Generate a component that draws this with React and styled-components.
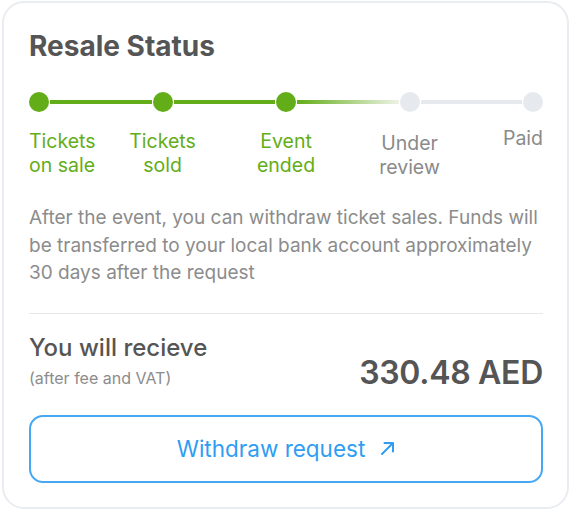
import React from 'react';
import styled, { createGlobalStyle } from 'styled-components';

const GlobalStyle = createGlobalStyle`
  body {
    margin: 0;
    background: #ffffff;
    font-family: Inter, "Noto Sans", sans-serif;
  }
`;

const green = '#63ad18';
const grey = '#e6eaef';

const Page = styled.div`
  padding: 1px 2px;
`;

const Card = styled.div`
  width: 567px;
  height: 508px;
  box-sizing: border-box;
  border: 2px solid #e9ecf0;
  border-radius: 22px;
  padding: 26px 24px 0 25px;
  display: flex;
  flex-direction: column;
`;

const Title = styled.h2`
  margin: 0;
  font-size: 28px;
  font-weight: 700;
  color: #555555;
  line-height: 34px;
`;

const Track = styled.div`
  display: flex;
  margin-top: 29px;
`;

const Step = styled.div`
  width: 20px;
  display: flex;
  flex-direction: column;
  align-items: ${(p) => p.$align || 'center'};
`;

const Dot = styled.div`
  width: 20px;
  height: 20px;
  border-radius: 50%;
  background: ${(p) => (p.$done ? green : grey)};
`;

const Connector = styled.div`
  flex: 1;
  height: 4px;
  margin: 8px 1px 0;
  background: ${(p) => p.$fill};
`;

const Label = styled.div`
  margin-top: ${(p) => p.$offset}px;
  white-space: nowrap;
  text-align: ${(p) => p.$textAlign || 'center'};
  font-size: 19.5px;
  line-height: 24px;
  color: ${(p) => (p.$done ? green : '#8a8a8a')};
`;

const Description = styled.p`
  margin: 25px 0 0;
  font-size: 19px;
  line-height: 27.5px;
  color: #8c8c8c;
`;

const Divider = styled.hr`
  margin: 26px 0 0;
  border: 0;
  height: 1px;
  background: #e6e8ec;
`;

const TotalRow = styled.div`
  display: flex;
  justify-content: space-between;
  align-items: flex-end;
  margin-top: 19px;
`;

const TotalLabel = styled.div`
  display: flex;
  flex-direction: column;
`;

const Receive = styled.span`
  font-size: 24px;
  font-weight: 500;
  line-height: 30px;
  color: #555555;
`;

const Note = styled.span`
  font-size: 16px;
  line-height: 22px;
  color: #8c8c8c;
  margin-top: 4px;
`;

const Amount = styled.span`
  font-size: 32px;
  font-weight: 600;
  line-height: 32px;
  letter-spacing: -0.3px;
  color: #555555;
`;

const Button = styled.button`
  margin-top: 26px;
  height: 68px;
  border: 2px solid #46a8f2;
  border-radius: 14px;
  background: #ffffff;
  color: #2f9df2;
  font-family: inherit;
  font-size: 22.5px;
  display: flex;
  align-items: center;
  justify-content: center;
  gap: 15px;
  cursor: pointer;
`;

const Arrow = () => (
  <svg width="15" height="15" viewBox="0 0 15 15" fill="none">
    <path
      d="M2 13L13 2M4.5 2H13V10.5"
      stroke="currentColor"
      strokeWidth="2"
      strokeLinecap="round"
      strokeLinejoin="round"
    />
  </svg>
);

const steps = [
  { label: ['Tickets', 'on sale'], done: true, align: 'flex-start', textAlign: 'left', offset: 17 },
  { label: ['Tickets', 'sold'], done: true, offset: 17 },
  { label: ['Event', 'ended'], done: true, offset: 17 },
  { label: ['Under', 'review'], done: false, offset: 19 },
  { label: ['Paid'], done: false, align: 'flex-end', offset: 14 },
];

const fills = [green, green, `linear-gradient(90deg, ${green}, #eef3e6)`, grey];

export default function App() {
  return (
    <Page>
      <GlobalStyle />
      <Card>
        <Title>Resale Status</Title>
        <Track>
          {steps.map((s, i) => (
            <React.Fragment key={i}>
              <Step $align={s.align}>
                <Dot $done={s.done} />
                <Label $done={s.done} $offset={s.offset} $textAlign={s.textAlign}>
                  {s.label.map((l, j) => (
                    <div key={j}>{l}</div>
                  ))}
                </Label>
              </Step>
              {i < fills.length && <Connector $fill={fills[i]} />}
            </React.Fragment>
          ))}
        </Track>
        <Description>
          After the event, you can withdraw ticket sales. Funds will be transferred to your local
          bank account approximately 30 days after the request
        </Description>
        <Divider />
        <TotalRow>
          <TotalLabel>
            <Receive>You will recieve</Receive>
            <Note>(after fee and VAT)</Note>
          </TotalLabel>
          <Amount>330.48 AED</Amount>
        </TotalRow>
        <Button>
          Withdraw request
          <Arrow />
        </Button>
      </Card>
    </Page>
  );
}
